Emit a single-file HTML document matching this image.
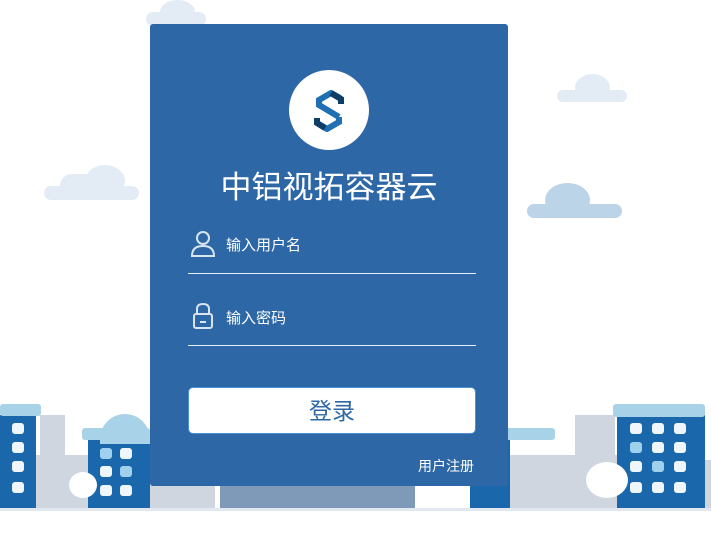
<!DOCTYPE html>
<html><head><meta charset="utf-8"><style>
body{margin:0;width:711px;height:533px;background:#fff;position:relative;overflow:hidden;font-family:"Liberation Sans","Noto Sans CJK SC",sans-serif}
.a{position:absolute}
.cloud{position:absolute;background:#e3ecf5;border-radius:20px}
.win{position:absolute;width:12px;height:11px;border-radius:3px;background:#eef6fb}
</style></head><body>
<div class="cloud" style="left:44px;top:186px;width:95px;height:14px"></div>
<div class="cloud" style="left:60px;top:174px;width:40px;height:24px"></div>
<div class="cloud" style="left:85px;top:165px;width:40px;height:32px;border-radius:50%"></div>
<div class="cloud" style="left:557px;top:90px;width:70px;height:12px"></div>
<div class="cloud" style="left:575px;top:74px;width:35px;height:28px;border-radius:50%"></div>
<div class="cloud" style="left:527px;top:204px;width:95px;height:14px;background:#bcd4e8"></div>
<div class="cloud" style="left:545px;top:183px;width:45px;height:34px;border-radius:50%;background:#bcd4e8"></div>
<div class="cloud" style="left:146px;top:12px;width:60px;height:14px"></div>
<div class="cloud" style="left:160px;top:0;width:35px;height:24px;border-radius:50%"></div>
<div class="a" style="left:0;top:508px;width:711px;height:3px;background:#e2e8ef"></div>
<div class="a" style="left:35px;top:455px;width:180px;height:53px;background:#cfd6e0"></div>
<div class="a" style="left:40px;top:415px;width:25px;height:93px;background:#cfd6e0"></div>
<div class="a" style="left:500px;top:455px;width:120px;height:53px;background:#cfd6e0"></div>
<div class="a" style="left:575px;top:415px;width:40px;height:93px;background:#cfd6e0"></div>
<div class="a" style="left:700px;top:460px;width:11px;height:48px;background:#cfd6e0"></div>
<div class="a" style="left:220px;top:486px;width:195px;height:22px;background:#7f9ab8"></div>
<div class="a" style="left:0;top:415px;width:36px;height:93px;background:#1a68ab"></div>
<div class="a" style="left:0;top:404px;width:41px;height:12px;background:#a8d2e8;border-radius:3px"></div>
<div class="a" style="left:88px;top:435px;width:62px;height:73px;background:#1a68ab"></div>
<div class="a" style="left:82px;top:428px;width:68px;height:12px;background:#a8d2e8;border-radius:3px"></div>
<div class="a" style="left:100px;top:414px;width:50px;height:30px;background:#a8d2e8;border-radius:25px 25px 0 0"></div>
<div class="a" style="left:470px;top:440px;width:40px;height:68px;background:#1a68ab"></div>
<div class="a" style="left:505px;top:428px;width:50px;height:12px;background:#a8d2e8;border-radius:3px"></div>
<div class="a" style="left:617px;top:415px;width:88px;height:93px;background:#1a68ab"></div>
<div class="a" style="left:613px;top:404px;width:92px;height:13px;background:#a8d2e8;border-radius:3px"></div>
<div class="a" style="left:586px;top:462px;width:42px;height:36px;background:#fff;border-radius:50%"></div>
<div class="a" style="left:69px;top:472px;width:28px;height:26px;background:#fff;border-radius:50%"></div>
<div class="win" style="left:630px;top:423px"></div><div class="win" style="left:652px;top:423px"></div><div class="win" style="left:674px;top:423px"></div>
<div class="win" style="left:630px;top:442px;background:#9fd1ef"></div><div class="win" style="left:652px;top:442px"></div><div class="win" style="left:674px;top:442px"></div>
<div class="win" style="left:630px;top:461px"></div><div class="win" style="left:652px;top:461px;background:#9fd1ef"></div><div class="win" style="left:674px;top:461px"></div>
<div class="win" style="left:630px;top:482px"></div><div class="win" style="left:652px;top:482px"></div><div class="win" style="left:674px;top:482px"></div>
<div class="win" style="left:12px;top:423px"></div><div class="win" style="left:12px;top:442px"></div><div class="win" style="left:12px;top:461px"></div><div class="win" style="left:12px;top:482px"></div>
<div class="win" style="left:100px;top:448px;background:#9fd1ef"></div><div class="win" style="left:120px;top:448px"></div>
<div class="win" style="left:100px;top:466px"></div><div class="win" style="left:120px;top:466px;background:#9fd1ef"></div>
<div class="win" style="left:100px;top:485px"></div><div class="win" style="left:120px;top:485px"></div>
<div class="a" style="left:150px;top:24px;width:358px;height:462px;background:#2e67a6;border-radius:3px"></div>
<div class="a" style="left:289px;top:70px;width:80px;height:80px;background:#fff;border-radius:50%"></div>
<svg class="a" style="left:309px;top:90px" width="40" height="42" viewBox="0 0 40 42" fill="none" stroke-width="6" stroke-linejoin="miter">
<path d="M31 8 L22 3 L10 10 L10 15 L30 27" stroke="#1f6fb2"/>
<path d="M22 3 L32 9 L32 14" stroke="#0e3d66"/>
<path d="M30 27 L30 32 L18 39 L8 33" stroke="#1f6fb2"/>
<path d="M8 28 L8 33 L16 38" stroke="#0e3d66"/>
</svg>
<div class="a" style="left:150px;top:168px;width:358px;text-align:center;color:#fff;font-size:31px;line-height:40px">中铝视拓容器云</div>
<svg class="a" style="left:190px;top:230px" width="26" height="28" viewBox="0 0 26 28" fill="none" stroke="#d8e4f0" stroke-width="2"><circle cx="13" cy="8" r="6"/><path d="M2 26 Q2 16 13 16 Q24 16 24 26 Z"/></svg>
<div class="a" style="left:226px;top:234px;color:#fff;font-size:15px">输入用户名</div>
<div class="a" style="left:188px;top:273px;width:288px;height:1px;background:#e8eef5"></div>
<svg class="a" style="left:192px;top:302px" width="22" height="28" viewBox="0 0 22 28" fill="none" stroke="#d8e4f0" stroke-width="2"><path d="M5 12 V7 Q5 2 11 2 Q17 2 17 7 V12"/><rect x="2" y="12" width="18" height="14" rx="2"/><path d="M8 20 H14"/></svg>
<div class="a" style="left:226px;top:307px;color:#fff;font-size:15px">输入密码</div>
<div class="a" style="left:188px;top:345px;width:288px;height:1px;background:#e8eef5"></div>
<div class="a" style="left:188px;top:387px;width:288px;height:47px;background:#fff;border:1px solid #4d8fd6;border-radius:5px;box-sizing:border-box;text-align:center;line-height:47px;color:#2e67a6;font-size:23px">登录</div>
<div class="a" style="left:418px;top:456px;color:#fff;font-size:14px">用户注册</div>
</body></html>
